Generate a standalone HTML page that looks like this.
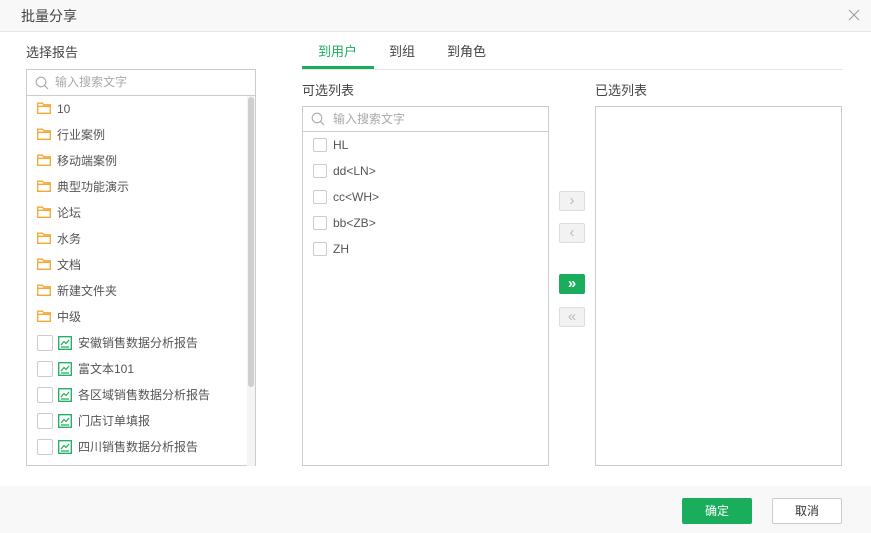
<!DOCTYPE html>
<html><head><meta charset="utf-8"><style>
*{box-sizing:border-box;margin:0;padding:0}
body{width:871px;height:533px;position:relative;background:#fff;font-family:"Liberation Sans","Noto Sans CJK SC",sans-serif;font-size:12px;color:#555;overflow:hidden}
.a{position:absolute}
.hdr{left:0;top:0;width:871px;height:32px;background:#f8f8f8;border-bottom:1px solid #e6e6ea}
.box{border:1px solid #ccc;background:#fff}
.srch{height:26px;border-bottom:1px solid #ccc;color:#aaa;font-size:12px;line-height:24px;padding-left:28px;position:relative}
.cb{width:14px;height:14px;border:1px solid #ccc;border-radius:2px;background:#fff}
.it{position:absolute;font-size:12px;color:#555;line-height:16px}
.btn{width:26px;height:20px;border:1px solid #ddd;background:#f2f2f2;border-radius:2px;color:#bbb;text-align:center;line-height:17px;font-size:15px}
</style></head><body>
<div class="a hdr"></div>
<div class="a" style="left:21px;top:6px;font-size:14px;color:#444">批量分享</div>
<svg class="a" style="left:848px;top:9px" width="12" height="12"><path d="M1 1L11 11M11 1L1 11" stroke="#999" stroke-width="1"/></svg>

<div class="a" style="left:26px;top:42px;font-size:13px;color:#444">选择报告</div>
<div class="a box" style="left:26px;top:69px;width:230px;height:397px">
<div class="srch">输入搜索文字<svg style="position:absolute;left:8px;top:6px" width="14" height="14"><circle cx="6" cy="6" r="4.8" stroke="#aaa" fill="none" stroke-width="1.1"/><path d="M9.5 9.5L13 13" stroke="#aaa" stroke-width="1.2"/></svg></div>
<div class="a" style="left:220px;top:26px;width:8px;height:370px;background:#f4f4f4"></div>
<div class="a" style="left:221px;top:27px;width:6px;height:290px;background:#cfcfcf;border-radius:3px"></div>
</div>

<div class="a" style="left:318px;top:41px;font-size:13px;color:#1aad5c">到用户</div>
<div class="a" style="left:389px;top:41px;font-size:13px;color:#444">到组</div>
<div class="a" style="left:447px;top:41px;font-size:13px;color:#444">到角色</div>
<div class="a" style="left:302px;top:69px;width:541px;height:1px;background:#e6e6ea"></div>
<div class="a" style="left:302px;top:66px;width:72px;height:3px;background:#1aad5c"></div>

<div class="a" style="left:302px;top:80px;font-size:13px;color:#444">可选列表</div>
<div class="a box" style="left:302px;top:106px;width:247px;height:360px">
<div class="srch" style="height:25px;padding-left:30px">输入搜索文字<svg style="position:absolute;left:8px;top:5px" width="14" height="14"><circle cx="6" cy="6" r="4.8" stroke="#aaa" fill="none" stroke-width="1.1"/><path d="M9.5 9.5L13 13" stroke="#aaa" stroke-width="1.2"/></svg></div>
</div>
<div class="a" style="left:595px;top:80px;font-size:13px;color:#444">已选列表</div>
<div class="a box" style="left:595px;top:106px;width:247px;height:360px"></div>

<div class="a btn" style="left:559px;top:191px">›</div>
<div class="a btn" style="left:559px;top:223px">‹</div>
<div class="a btn" style="left:559px;top:274px;background:#1aad5c;border-color:#1aad5c;color:#fff;font-weight:bold">»</div>
<div class="a btn" style="left:559px;top:307px">«</div>

<div class="a" style="left:0;top:486px;width:871px;height:47px;background:#f8f8f8"></div>
<div class="a" style="left:682px;top:498px;width:70px;height:26px;background:#1aad5c;border-radius:2px;color:#fff;text-align:center;line-height:26px">确定</div>
<div class="a" style="left:772px;top:498px;width:70px;height:26px;background:#fff;border:1px solid #ccc;border-radius:2px;color:#333;text-align:center;line-height:24px">取消</div>

<div id="left"></div>
<script>
var f=["10","行业案例","移动端案例","典型功能演示","论坛","水务","文档","新建文件夹","中级"];
var r=["安徽销售数据分析报告","富文本101","各区域销售数据分析报告","门店订单填报","四川销售数据分析报告"];
var h="";
var fold='<svg width="14" height="12"><path d="M0.7 1.2H5.5L6.8 2.8H13.3V11.3H0.7Z M0.7 4.3H13.3" fill="none" stroke="#f7a631" stroke-width="1.3"/></svg>';
var ch='<svg width="14" height="14"><rect x="0.7" y="0.7" width="12.6" height="12.6" fill="none" stroke="#1aad5c" stroke-width="1.3"/><path d="M3 9L6 5.5L8 7.5L11 4M3 11H11" fill="none" stroke="#1aad5c" stroke-width="1.2"/></svg>';
f.forEach(function(t,i){var y=101+i*26;h+='<div class="a" style="left:37px;top:'+(y+1)+'px">'+fold+'</div><div class="it" style="left:57px;top:'+y+'px">'+t+'</div>';});
r.forEach(function(t,i){var y=335+i*26;h+='<div class="a cb" style="left:37px;top:'+(y)+'px;width:16px;height:16px"></div><div class="a" style="left:58px;top:'+(y+1)+'px">'+ch+'</div><div class="it" style="left:78px;top:'+y+'px">'+t+'</div>';});
var u=["HL","dd&lt;LN&gt;","cc&lt;WH&gt;","bb&lt;ZB&gt;","ZH"];
u.forEach(function(t,i){var y=137+i*26;h+='<div class="a cb" style="left:313px;top:'+(y+1)+'px"></div><div class="it" style="left:333px;top:'+y+'px;font-size:12px">'+t+'</div>';});
document.getElementById("left").innerHTML=h;
</script>
</body></html>
